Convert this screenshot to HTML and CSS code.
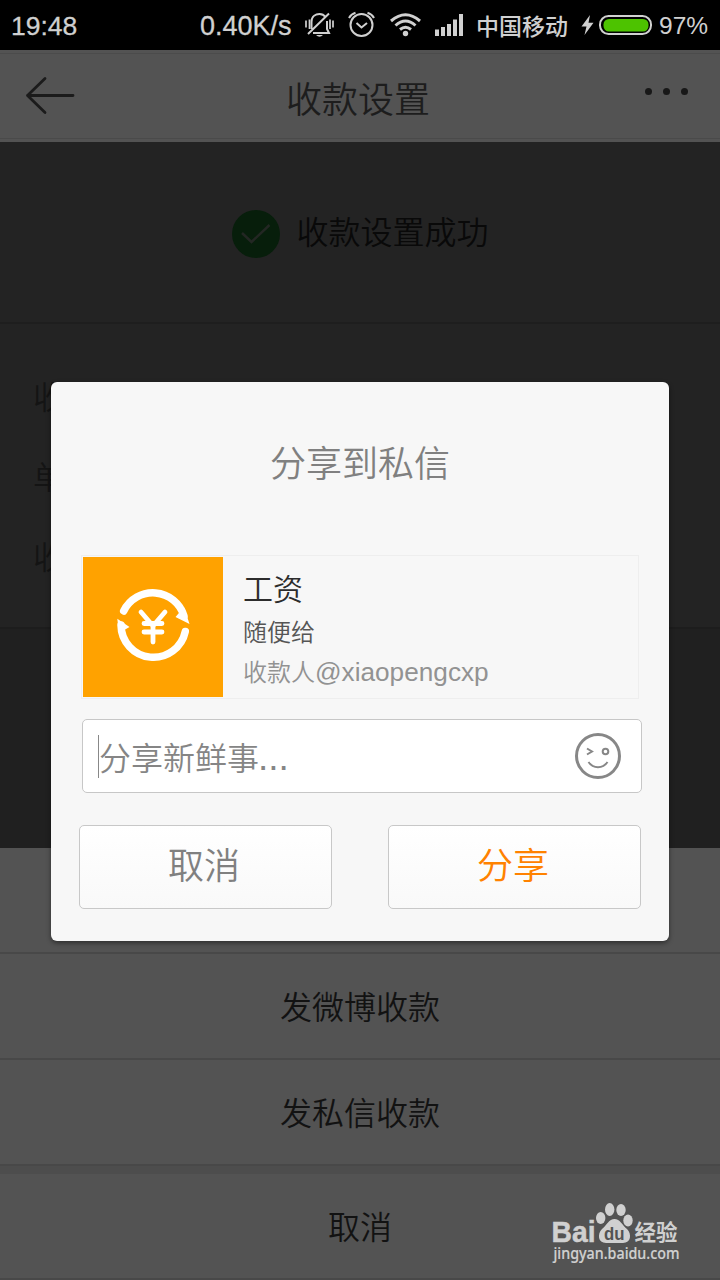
FILE: index.html
```html
<!DOCTYPE html>
<html lang="zh-CN">
<head>
<meta charset="utf-8">
<title>收款设置</title>
<link rel="stylesheet" href="styles.css">
</head>
<body>
<div class="screen">
  <header class="status">
    <span class="time">19:48</span>
    <span class="speed">0.40K/s</span>
    <svg class="status-icons" width="160" height="50" viewBox="304 0 160 50" fill="none" stroke="#d0d0d0" stroke-width="2">
      <path d="M311.500 29V22C311.500 16 316 14 319.500 14C322 14 324 15 325.500 17M327 21V29L329 33H313M308 34L329 13.500"/>
      <path d="M306 20.500V27.500M309.500 19.500V29M330 19.500V29M333 20.500V27.500" stroke-width="1.700"/>
      <path d="M316 35H323Q319.500 38.500 316 35Z" fill="#d0d0d0" stroke="none"/>
      <circle cx="361.500" cy="25" r="11"/>
      <path d="M356.500 23L361.500 27.500L367 23M349 18Q351 14 355.500 12.700M374 18Q372 14 367.500 12.700"/>
      <g stroke-width="3">
        <path d="M391 21Q405.500 8.500 420 21M395.500 25.500Q405.500 16.500 415.500 25.500M400 29.500Q405.500 25 411 29.500"/>
      </g>
      <circle cx="405.500" cy="33.500" r="2.700" fill="#d0d0d0" stroke="none"/>
      <path d="M437 29.500V36M443 27V36M449 24V36M455 19.500V36M461 14V36" stroke-width="4"/>
    </svg>
    <span class="carrier">中国移动</span>
    <svg class="battery" width="74" height="50" viewBox="580 0 74 50">
      <path d="M590 15L581.500 26.500H586.500L584.500 35L593.500 22.800H588.500Z" fill="#d0d0d0"/>
      <rect x="600" y="16" width="51" height="18" rx="8.500" fill="none" stroke="#d0d0d0" stroke-width="2"/>
      <rect x="603.500" y="19" width="45" height="12.500" rx="5.500" fill="#4dc300"/>
    </svg>
    <span class="percent">97%</span>
  </header>
  <nav class="navbar">
    <svg class="back" width="50" height="40" viewBox="25 76 50 40" fill="none" stroke="#1b1b1b" stroke-width="2.800" stroke-linecap="round" stroke-linejoin="round">
      <path d="M45 78.500L27.500 95.500L45 112.500M27.500 95.500H73"/>
    </svg>
    <h1 class="nav-title">收款设置</h1>
    <div class="more"><i></i><i></i><i></i></div>
  </nav>
  <main class="content">
    <section class="success">
      <svg width="48" height="48" viewBox="0 0 48 48"><circle cx="24" cy="24" r="24" fill="#071e0b"/><path d="M10 23L19.500 32L37.500 15" fill="none" stroke="#232723" stroke-width="2.500"/></svg>
      <span>收款设置成功</span>
    </section>
    <section class="details"><p>收</p><p>单</p><p>收</p></section>
  </main>
  <section class="sheet">
    <div class="row"></div>
    <div class="row">发微博收款</div>
    <div class="row">发私信收款</div>
    <div class="row cancel">取消</div>
  </section>
  <section class="dialog">
    <h2 class="dialog-title">分享到私信</h2>
    <div class="card">
      <svg class="thumb" width="140" height="140" viewBox="83 557 140 140">
        <rect x="83" y="557" width="140" height="140" fill="#ffa200"/>
        <g fill="none" stroke="#fff" stroke-linecap="round">
          <path d="M123.700 611A32.500 32.500 0 0 1 184 616M185.300 631.500A32.500 32.500 0 0 1 121 625" stroke-width="7.500"/>
          <path d="M175.500 617L184 607L189.500 624Z M117.300 618.700L129.500 627L119 633Z" fill="#fff" stroke="none"/>
          <path d="M141 612L153 626L165 612M153 626V642M144 623.500H162M144 632H162" stroke-width="4.800" stroke-linejoin="round"/>
        </g>
      </svg>
      <div class="card-text">
        <strong>工资</strong>
        <span class="desc">随便给</span>
        <span class="payee">收款人<span class="latin">@xiaopengcxp</span></span>
      </div>
    </div>
    <div class="field">
      <span class="placeholder">分享新鲜事<span class="latin">...</span></span>
      <svg width="48" height="48" viewBox="0 0 48 48" fill="none" stroke="#878787" stroke-width="2">
        <circle cx="24" cy="24" r="21.500" stroke-width="3"/>
        <path d="M13 16.500L18 19.500L13 22.500M14.500 30Q18 35.200 24 35.200T33.500 30"/>
        <circle cx="31.500" cy="19.500" r="2.800"/>
      </svg>
    </div>
    <div class="actions">
      <button class="btn">取消</button>
      <button class="btn primary">分享</button>
    </div>
  </section>
  <svg class="watermark" width="140" height="70" viewBox="545 1200 140 70" fill="#d0d0d0">
    <text class="brand" x="551.500" y="1242" textLength="44" lengthAdjust="spacingAndGlyphs">Bai</text>
    <ellipse cx="600.700" cy="1218" rx="4.700" ry="6"/><ellipse cx="609.700" cy="1209.500" rx="4.700" ry="6.500"/>
    <ellipse cx="621" cy="1210" rx="4.700" ry="6"/><ellipse cx="628" cy="1220.500" rx="4.700" ry="6"/>
    <path d="M614.500 1219C620 1219 622 1225 627 1229C632 1234 631 1243 623 1243H606C598 1243 597 1234 602 1229C607 1225 609 1219 614.500 1219Z"/>
    <text class="du" x="604" y="1239.500" textLength="20.500" lengthAdjust="spacingAndGlyphs">du</text>
    <text class="jingyan" x="634.500" y="1240" textLength="43" lengthAdjust="spacingAndGlyphs">经验</text>
    <text class="url" x="553.500" y="1259" textLength="126" lengthAdjust="spacingAndGlyphs">jingyan.baidu.com</text>
  </svg>
</div>
</body>
</html>
```

FILE: styles.css
```css
* { box-sizing: border-box; margin: 0; padding: 0; }
body { background: #000; font-family: "Noto Sans CJK SC", sans-serif; font-weight: 350; }
svg { display: block; flex: none; }
.latin { font-family: "Liberation Sans", sans-serif; }
.screen { position: relative; width: 720px; height: 1280px; overflow: hidden; display: flex; flex-direction: column; }

.status { height: 50px; display: flex; align-items: center; color: #d0d0d0; font: 400 26px/50px "Liberation Sans", sans-serif; white-space: nowrap; padding: 0 0 0 11px; }
.time { width: 189px; padding-top: 2px; font-size: 26.500px; -webkit-text-stroke: .3px #d0d0d0; }
.speed { width: 104px; padding-top: 2px; font-size: 27px; -webkit-text-stroke: .3px #d0d0d0; }
.carrier { width: 92px; margin: 0 12px; font: 500 23px/50px "Noto Sans CJK SC", sans-serif; }
.percent { margin-left: 5px; font-size: 24.500px; padding-top: 2px; }

.navbar { height: 92px; display: flex; justify-content: space-between; align-items: flex-start; padding: 21px 32px 0 25px; background: linear-gradient(#4b4b4b, #4b4b4b) 0 3px / 100% 1px no-repeat, linear-gradient(#4a4a4a, #4a4a4a) 0 88px / 100% 1px no-repeat, #535353; }
.back { margin-top: 5px; }
.nav-title { font-size: 36px; font-weight: 350; line-height: 52px; color: #1d1d1d; width: 148px; }
.more { display: flex; gap: 11px; padding-top: 17px; }
.more i { width: 7px; height: 7px; border-radius: 50%; background: #181818; }

.content { height: 706px; background: #202020; }
.success { height: 182px; border-bottom: 2px solid #1e1e1e; background: #232323; display: flex; justify-content: center; gap: 16px; padding: 68px 0 0 1px; color: #090909; font-size: 32px; line-height: 40px; }
.details { height: 305px; background: #232323; border-bottom: 2px solid #1d1d1d; padding: 31px 33px; color: #141414; font-size: 32px; line-height: 80px; }

.sheet { background: #535353; height: 432px; }
.row { height: 106px; border-bottom: 2px solid #484848; text-align: center; font-size: 32px; line-height: 102px; color: #121212; }
.cancel { border-top: 8px solid #4d4d4d; height: 114px; }

.dialog { position: absolute; left: 51px; top: 382px; width: 618px; height: 559px; border-radius: 6px; background: #f7f7f7; box-shadow: 0 2px 5px rgba(0, 0, 0, .45); padding: 53px 28px 0; }
.dialog-title { font-size: 36px; font-weight: 350; line-height: 52px; text-align: center; color: #808080; }
.card { display: flex; width: 558px; height: 144px; margin: 68px 0 0 2px; border: 1px solid #eee; padding: 1px 0 0 1px; }
.card-text { display: flex; flex-direction: column; padding: 9px 0 0 20px; }
.card-text strong { font-size: 30px; line-height: 42px; font-weight: 350; color: #2c2c2c; }
.desc { font-size: 24px; line-height: 44px; padding-top: 1px; color: #555; }
.payee { font-size: 24px; line-height: 36px; color: #929292; white-space: nowrap; }
.payee .latin { font-size: 26.200px; line-height: 1; }
.field { display: flex; justify-content: space-between; align-items: center; width: 560px; height: 74px; margin: 20px 0 0 3px; padding: 0 19px 0 15px; border: 1px solid #c7c7c7; border-radius: 5px; background: #fff; }
.placeholder { border-left: 1px solid #888; height: 43px; line-height: 42px; font-size: 32px; color: #858585; }
.placeholder .latin { font-size: 37px; line-height: 1; margin-left: -1px; }
.actions { display: flex; gap: 56px; margin-top: 32px; }
.btn { width: 253px; height: 84px; border: 1px solid #c8c8c8; border-radius: 5px; background: linear-gradient(#fff, #f9f9f9); font: 350 36px/52px "Noto Sans CJK SC", sans-serif; color: #808080; padding: 0 3px 8px 0; }
.primary { color: #ff8200; }

.watermark { position: absolute; left: 545px; top: 1200px; overflow: visible; }
.brand { font: 700 29px "Liberation Sans", sans-serif; stroke: #d0d0d0; stroke-width: .5px; }
.du { font: 700 19px "Liberation Sans", sans-serif; fill: #535353; }
.jingyan { font: 700 22px "Noto Sans CJK SC", sans-serif; }
.url { font: 500 15.500px "Noto Sans", sans-serif; stroke: #d0d0d0; stroke-width: .2px; }
```
